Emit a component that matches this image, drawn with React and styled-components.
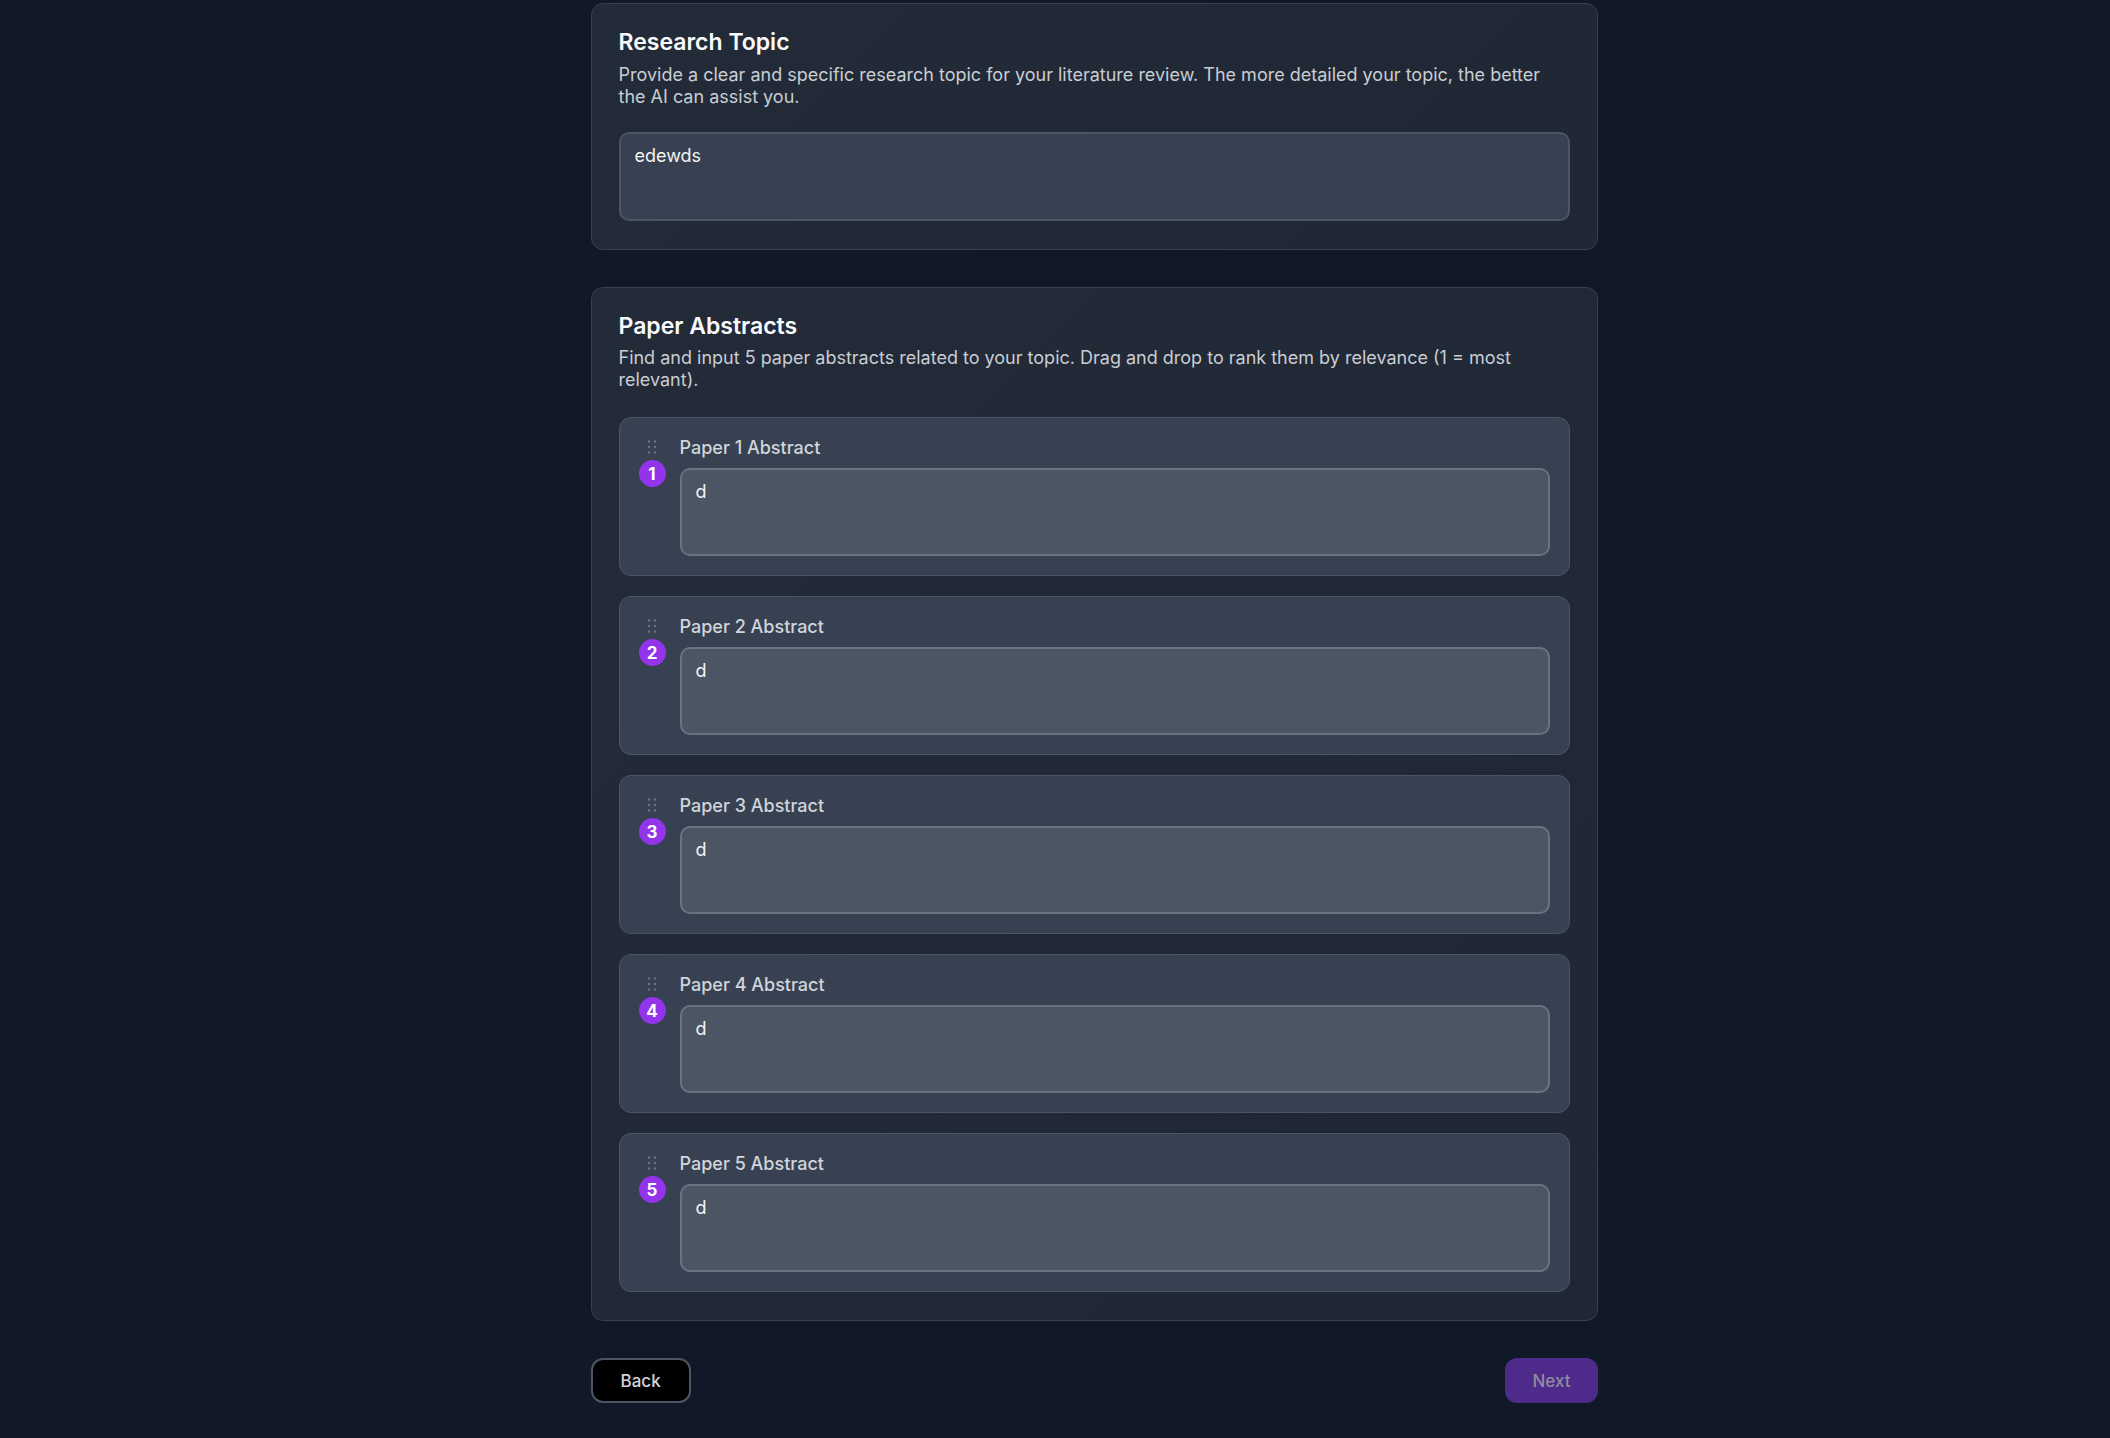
import React, { useState } from "react";
import styled, { createGlobalStyle } from "styled-components";

const GlobalStyle = createGlobalStyle`
  html, body {
    margin: 0;
    padding: 0;
    background: #111827;
    font-family: Inter, "Noto Sans", "Liberation Sans", sans-serif;
    color: #f9fafb;
  }
  * { box-sizing: border-box; }
`;

const Page = styled.div`
  min-height: 100vh;
  padding: 3px 0 0 78px;
  background: #111827;
`;

const Container = styled.div`
  width: 1007px;
  margin: 0 auto;
  display: flex;
  flex-direction: column;
  gap: 37px;
`;

const Card = styled.section`
  background: linear-gradient(135deg, #232b39 0%, #1f2734 100%);
  border: 1px solid #374151;
  border-radius: 12px;
  padding: 23px 27px 28px;
`;

const Title = styled.h2`
  margin: 0 0 5px;
  font-size: 23px;
  line-height: 31.5px;
  font-weight: 600;
  color: #f9fafb;
`;

const Description = styled.p`
  margin: 0;
  font-size: 18px;
  line-height: 22px;
  color: #c9cdd3;
`;

const TopicArea = styled.textarea`
  display: block;
  width: 100%;
  height: 89px;
  margin-top: 24px;
  padding: 8px 14px;
  resize: none;
  background: #374151;
  border: 2px solid #4b5563;
  border-radius: 10px;
  color: #f3f4f6;
  font-family: inherit;
  font-size: 18px;
  line-height: 27px;
  outline: none;
`;

const PaperList = styled.div`
  display: flex;
  flex-direction: column;
  gap: 20px;
  margin-top: 26px;
`;

const PaperItem = styled.div`
  display: flex;
  gap: 14px;
  padding: 18px 19px 19px 19px;
  background: #374151;
  border: 1px solid #4b5563;
  border-radius: 12px;
`;

const Handle = styled.div`
  width: 27px;
  display: flex;
  flex-direction: column;
  align-items: center;
  gap: 5px;
  padding-top: 3px;
  cursor: grab;
`;

const Rank = styled.span`
  width: 27px;
  height: 27px;
  border-radius: 50%;
  background: #9333ea;
  color: #ffffff;
  display: flex;
  align-items: center;
  justify-content: center;
  font-size: 17px;
  font-weight: 700;
`;

const PaperBody = styled.div`
  flex: 1;
  display: flex;
  flex-direction: column;
  gap: 9px;
`;

const Label = styled.label`
  font-size: 18px;
  line-height: 23px;
  font-weight: 500;
  color: #d1d5db;
`;

const AbstractArea = styled.textarea`
  display: block;
  width: 100%;
  height: 88px;
  padding: 8px 14px;
  resize: none;
  background: #4b5563;
  border: 2px solid #6b7280;
  border-radius: 10px;
  color: #f3f4f6;
  font-family: inherit;
  font-size: 18px;
  line-height: 27px;
  outline: none;
`;

const Footer = styled.div`
  display: flex;
  justify-content: space-between;
  align-items: center;
  padding-bottom: 36px;
`;

const Button = styled.button`
  height: 45px;
  padding: 0 ${(p) => (p.$primary ? "27px" : "28px")};
  border-radius: 12px;
  font-family: inherit;
  font-size: 17px;
  font-weight: 500;
  cursor: ${(p) => (p.disabled ? "not-allowed" : "pointer")};
  background: ${(p) => (p.$primary ? "#4e2a8a" : "#000000")};
  color: ${(p) => (p.$primary ? "#8f8b9e" : "#d1d5db")};
  border: ${(p) => (p.$primary ? "none" : "2px solid #4b5563")};
`;

const GripIcon = () => (
  <svg width="14" height="16" viewBox="0 0 14 16" fill="#6b7280">
    <circle cx="4" cy="2.5" r="1.3" />
    <circle cx="10" cy="2.5" r="1.3" />
    <circle cx="4" cy="8" r="1.3" />
    <circle cx="10" cy="8" r="1.3" />
    <circle cx="4" cy="13.5" r="1.3" />
    <circle cx="10" cy="13.5" r="1.3" />
  </svg>
);

export default function App() {
  const [topic, setTopic] = useState("edewds");
  const [abstracts, setAbstracts] = useState(["d", "d", "d", "d", "d"]);

  const updateAbstract = (index, value) => {
    setAbstracts((prev) => prev.map((a, i) => (i === index ? value : a)));
  };

  return (
    <Page>
      <GlobalStyle />
      <Container>
        <Card>
          <Title>Research Topic</Title>
          <Description>
            Provide a clear and specific research topic for your literature
            review. The more detailed your topic, the better the AI can assist
            you.
          </Description>
          <TopicArea value={topic} onChange={(e) => setTopic(e.target.value)} />
        </Card>

        <Card>
          <Title>Paper Abstracts</Title>
          <Description>
            Find and input 5 paper abstracts related to your topic. Drag and
            drop to rank them by relevance (1 = most relevant).
          </Description>
          <PaperList>
            {abstracts.map((text, i) => (
              <PaperItem key={i}>
                <Handle>
                  <GripIcon />
                  <Rank>{i + 1}</Rank>
                </Handle>
                <PaperBody>
                  <Label htmlFor={"abstract-" + i}>Paper {i + 1} Abstract</Label>
                  <AbstractArea
                    id={"abstract-" + i}
                    value={text}
                    onChange={(e) => updateAbstract(i, e.target.value)}
                  />
                </PaperBody>
              </PaperItem>
            ))}
          </PaperList>
        </Card>

        <Footer>
          <Button>Back</Button>
          <Button $primary disabled>
            Next
          </Button>
        </Footer>
      </Container>
    </Page>
  );
}
